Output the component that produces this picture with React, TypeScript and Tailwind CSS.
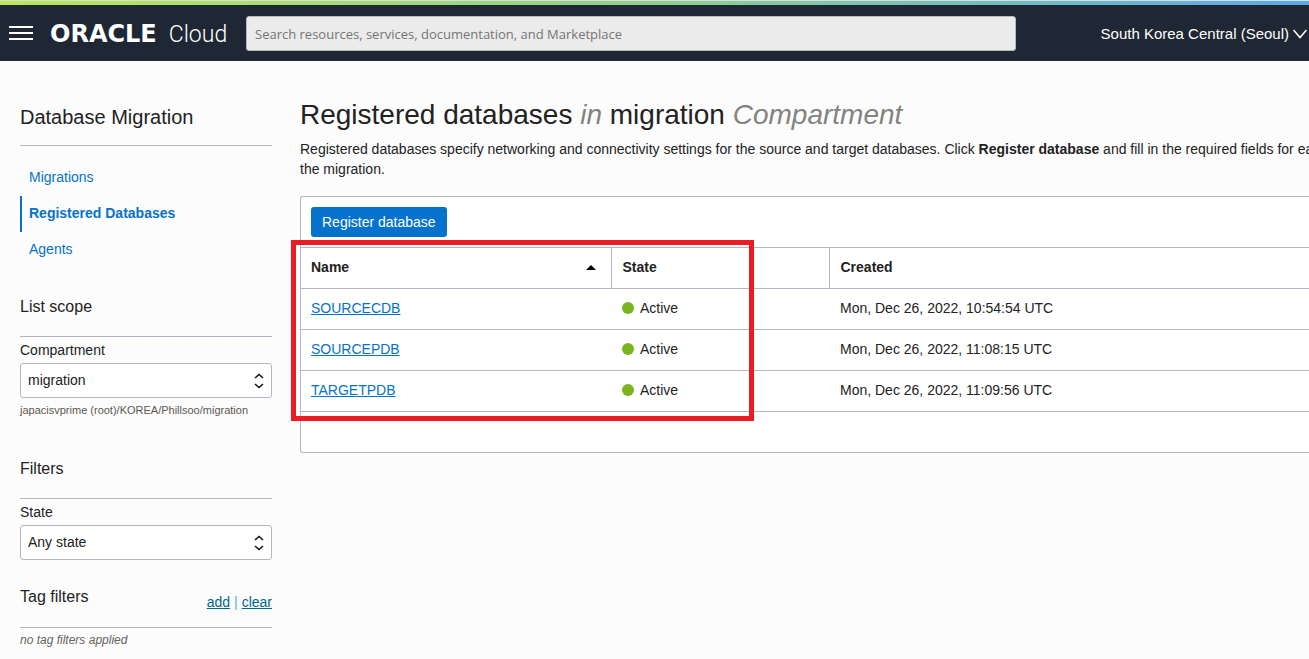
import React from "react";

type Database = { name: string; state: string; created: string };

const databases: Database[] = [
  { name: "SOURCECDB", state: "Active", created: "Mon, Dec 26, 2022, 10:54:54 UTC" },
  { name: "SOURCEPDB", state: "Active", created: "Mon, Dec 26, 2022, 11:08:15 UTC" },
  { name: "TARGETPDB", state: "Active", created: "Mon, Dec 26, 2022, 11:09:56 UTC" },
];

const navItems = [
  { label: "Migrations", active: false },
  { label: "Registered Databases", active: true },
  { label: "Agents", active: false },
];

function TopBar() {
  return (
    <header>
      <div className="h-px bg-[#dcdce0]" />
      <div className="h-1 bg-linear-to-r from-[#b9e94d] via-[#8ed08a] to-[#5aa9e6]" />
      <div className="flex h-14 items-center bg-[#1e2733] text-white">
        <button type="button" aria-label="Menu" className="ml-2 flex h-8 w-[26px] items-center justify-center">
          <svg width="24" height="14" viewBox="0 0 24 14" fill="currentColor" aria-hidden="true">
            <rect width="24" height="2" />
            <rect y="6" width="24" height="2" />
            <rect y="12" width="24" height="2" />
          </svg>
        </button>
        <a href="#home" className="ml-4 flex w-[196px] items-baseline gap-3 pt-0.5 leading-8">
          <span className="font-['DejaVu_Sans',sans-serif] text-[24px] font-bold">ORACLE</span>
          <span className="font-[Roboto,sans-serif] text-[23px] font-light">Cloud</span>
        </a>
        <input
          type="search"
          aria-label="Search"
          placeholder="Search resources, services, documentation, and Marketplace"
          className="h-[35px] max-w-[770px] flex-1 rounded-[3px] border border-[#b4bac2] bg-[#ebebeb] px-2 pt-0.5 font-['Open_Sans',sans-serif] text-[13px] placeholder:text-[#757575]"
        />
        <button type="button" className="mr-0.5 ml-auto flex items-center gap-1 pt-0.5 text-[15px] whitespace-nowrap">
          South Korea Central (Seoul)
          <svg width="14" height="10" viewBox="0 0 14 10" fill="none" stroke="currentColor" strokeWidth="1.5" aria-hidden="true">
            <path d="M0.5 1 L7 8.5 L13.5 1" />
          </svg>
        </button>
      </div>
    </header>
  );
}

function SelectField({ id, label, value }: { id: string; label: string; value: string }) {
  return (
    <div className="pt-[3px]">
      <label htmlFor={id} className="block leading-5">
        {label}
      </label>
      <div className="relative mt-[3px]">
        <select
          id={id}
          className="block h-[35px] w-full appearance-none rounded-[3px] border border-[#b2b7c2] bg-white px-[7px]"
        >
          <option>{value}</option>
        </select>
        <svg
          className="pointer-events-none absolute top-2.5 right-2"
          width="10"
          height="16"
          viewBox="0 0 10 16"
          fill="none"
          stroke="#161513"
          strokeWidth="1.6"
          aria-hidden="true"
        >
          <path d="M1 5 L5 1.5 L9 5 M1 11 L5 14.5 L9 11" />
        </svg>
      </div>
    </div>
  );
}

function Sidebar() {
  return (
    <aside className="w-[252px] shrink-0">
      <h2 className="border-b border-[#b2b7c2] pt-11 pb-4 text-[20px] leading-6">Database Migration</h2>
      <nav className="mt-[14px]">
        {navItems.map((item) => (
          <a
            key={item.label}
            href="#nav"
            className={
              item.active
                ? "block border-l-2 border-[#0572ce] pb-0.5 pl-[7px] leading-[34px] font-bold text-[#0572ce]"
                : "block border-l-2 border-transparent pb-0.5 pl-[7px] leading-[34px] text-[#0572ce]"
            }
          >
            {item.label}
          </a>
        ))}
      </nav>

      <h3 className="mt-[27px] border-b border-[#b2b7c2] pb-[17px] text-[16px] leading-6">List scope</h3>
      <SelectField id="compartment" label="Compartment" value="migration" />
      <p className="mt-1 text-[11px] leading-4 text-[#5a5853]">japacisvprime (root)/KOREA/Phillsoo/migration</p>

      <h3 className="mt-[39px] border-b border-[#b2b7c2] pb-[17px] text-[16px] leading-6">Filters</h3>
      <SelectField id="state" label="State" value="Any state" />

      <div className="mt-[25px] flex items-start justify-between border-b border-[#b2b7c2] pb-[15px]">
        <h3 className="text-[16px] leading-6">Tag filters</h3>
        <div className="flex gap-1 pt-[7px] leading-5 text-[#00688c]">
          <a href="#add" className="underline">add</a>
          <span className="text-[#5fa8d3]">|</span>
          <a href="#clear" className="underline">clear</a>
        </div>
      </div>
      <p className="mt-1 text-[12px] leading-4 text-[#66645f] italic">no tag filters applied</p>
    </aside>
  );
}

function DatabaseTable() {
  return (
    <div className="relative">
      <table className="w-full table-fixed border-collapse text-left">
        <thead>
          <tr className="h-[41px] border-y border-[#b2b7c2]">
            <th className="w-[310px] border-r border-[#b2b7c2] px-2.5 pb-0.5">
              <span className="flex items-center justify-between pr-[5px]">
                Name
                <svg width="10" height="5" viewBox="0 0 10 5" fill="#000" aria-hidden="true">
                  <path d="M0 5 L5 0 L10 5 Z" />
                </svg>
              </span>
            </th>
            <th className="w-[218px] border-r border-[#b2b7c2] px-[11px] pb-0.5">State</th>
            <th className="px-[11px] pb-0.5">Created</th>
          </tr>
        </thead>
        <tbody>
          {databases.map((db) => (
            <tr key={db.name} className="h-[41px] border-b border-[#b2b7c2]">
              <td className="px-2.5 pb-0.5">
                <a href="#database" className="text-[#0572ce] underline">
                  {db.name}
                </a>
              </td>
              <td className="px-[11px] pb-0.5">
                <span className="flex items-center gap-1.5">
                  <span className="size-3 rounded-full bg-[#7ab51d]" />
                  {db.state}
                </span>
              </td>
              <td className="px-[11px] pb-0.5">{db.created}</td>
            </tr>
          ))}
        </tbody>
      </table>
      <div className="pointer-events-none absolute -top-[7px] -left-2.5 h-[181px] w-[463px] border-[5px] border-[#ed1c24]" />
    </div>
  );
}

export default function App() {
  return (
    <div className="min-h-screen overflow-x-hidden bg-[#fcfcfc] font-['Liberation_Sans',Arial,sans-serif] text-[14px] text-[#222]">
      <TopBar />
      <div className="flex gap-7 pb-2 pl-5">
        <Sidebar />
        <main className="min-w-0 flex-1">
          <h1 className="pt-[38px] text-[28px] leading-8 whitespace-nowrap">
            Registered databases <em className="text-[#85837f]">in</em> migration{" "}
            <em className="text-[#85837f]">Compartment</em>
          </h1>
          <p className="mt-2 leading-5 whitespace-nowrap">
            Registered databases specify networking and connectivity settings for the source and target databases. Click{" "}
            <strong>Register database</strong> and fill in the required fields for each
            <br />
            the migration.
          </p>
          <section className="mt-[17px] rounded-l-[3px] border border-r-0 border-[#b2b7c2] bg-white pb-10">
            <div className="p-2.5">
              <button type="button" className="block h-[30px] rounded-[3px] bg-[#0572ce] px-[11px] text-white">
                Register database
              </button>
            </div>
            <DatabaseTable />
          </section>
        </main>
      </div>
    </div>
  );
}
